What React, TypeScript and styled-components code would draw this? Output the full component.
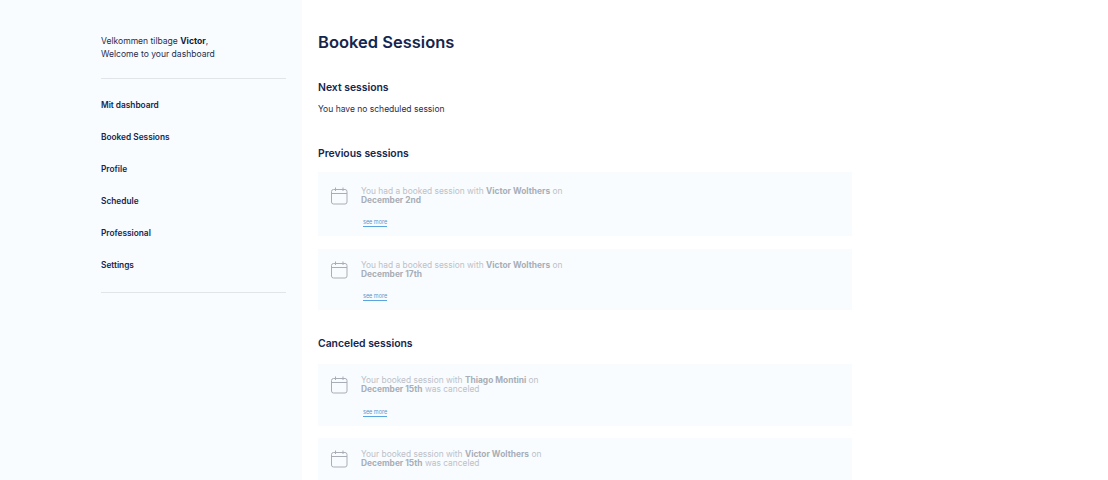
import React from 'react';
import styled, { createGlobalStyle } from 'styled-components';

const GlobalStyle = createGlobalStyle`
  html, body {
    margin: 0;
    padding: 0;
    background: #fff;
    overflow: hidden;
  }
  * { box-sizing: border-box; }
  body {
    font-family: "Inter", "Open Sans", sans-serif;
    color: #14264f;
  }
`;

const Page = styled.div`
  display: flex;
  width: 1108px;
  height: 480px;
  overflow: hidden;
`;

const Sidebar = styled.aside`
  width: 302px;
  flex-shrink: 0;
  background: #f8fcff;
  padding: 35px 16px 0 101px;
`;

const Greeting = styled.p`
  margin: 0;
  padding-bottom: 18px;
  font-size: 8.55px;
  line-height: 12.5px;
  color: #1f2d50;
  b { font-weight: 700; color: #0e1c3d; }
`;

const Nav = styled.nav`
  display: flex;
  flex-direction: column;
  gap: 20.1px;
  padding: 20px 0 20.5px;
  border-top: 1px solid #e1e5ea;
  border-bottom: 1px solid #e1e5ea;
`;

const NavItem = styled.a`
  font-size: 8.3px;
  line-height: 12px;
  font-weight: 600;
  color: #14264f;
`;

const Main = styled.main`
  flex: 1;
  padding: 31px 0 0 16px;
`;

const Title = styled.h1`
  margin: 0 0 28px;
  font-size: 16.5px;
  line-height: 22px;
  font-weight: 600;
  color: #14264f;
`;

const SectionTitle = styled.h2`
  margin: 0;
  font-size: 10.4px;
  line-height: 14px;
  font-weight: 600;
  color: #14264f;
`;

const Empty = styled.p`
  margin: 8px 0 32px;
  font-size: 8.5px;
  line-height: 12px;
  color: #1f2d50;
`;

const CardList = styled.div<{ $top: number; $gap: number; $bottom: number }>`
  display: flex;
  flex-direction: column;
  gap: ${p => p.$gap}px;
  margin: ${p => p.$top}px 0 ${p => p.$bottom}px;
`;

const Card = styled.div<{ $height: number; $inset: number }>`
  display: flex;
  gap: 13px;
  width: 534px;
  height: ${p => p.$height}px;
  padding: ${p => p.$inset}px 13px 9.5px;
  background: #f8fcff;
`;

const Icon = styled.svg`
  width: 17px;
  height: 18px;
  flex-shrink: 0;
  fill: none;
  stroke: #a9aeb6;
  stroke-width: 1;
`;

const CardBody = styled.div`
  flex: 1;
  display: flex;
  flex-direction: column;
  align-items: flex-start;
`;

const CardText = styled.p`
  margin: 0;
  font-size: 8.4px;
  line-height: 9.4px;
  color: #bdc1c7;
  b { font-weight: 700; color: #a9aeb6; }
`;

const SeeMore = styled.a`
  margin: auto 0 0 2px;
  font-size: 5.5px;
  line-height: 7px;
  color: #5a96cc;
  border-bottom: 1px solid #5aa5e0;
`;

const CalendarIcon = () => (
  <Icon viewBox="0 0 17 18">
    <rect x="0.5" y="2.5" width="15.5" height="14.5" rx="2" />
    <path d="M0.5 6.5H16M4.5 0.5V4M12 0.5V4" />
  </Icon>
);

interface SessionProps {
  height: number;
  inset?: number;
  lead: string;
  name: string;
  date: string;
  tail?: string;
  link?: boolean;
}

const Session: React.FC<SessionProps> = ({ height, inset = 12, lead, name, date, tail, link = true }) => (
  <Card $height={height} $inset={inset}>
    <CalendarIcon />
    <CardBody>
      <CardText>
        {lead} <b>{name}</b> on
        <br />
        <b>{date}</b>
        {tail ? ` ${tail}` : ''}
      </CardText>
      {link && <SeeMore>see more</SeeMore>}
    </CardBody>
  </Card>
);

const navItems = ['Mit dashboard', 'Booked Sessions', 'Profile', 'Schedule', 'Professional', 'Settings'];

export default function App() {
  return (
    <Page>
      <GlobalStyle />
      <Sidebar>
        <Greeting>
          Velkommen tilbage <b>Victor</b>,
          <br />
          Welcome to your dashboard
        </Greeting>
        <Nav>
          {navItems.map(item => (
            <NavItem key={item}>{item}</NavItem>
          ))}
        </Nav>
      </Sidebar>
      <Main>
        <Title>Booked Sessions</Title>
        <SectionTitle>Next sessions</SectionTitle>
        <Empty>You have no scheduled session</Empty>
        <SectionTitle>Previous sessions</SectionTitle>
        <CardList $top={11} $gap={13} $bottom={27}>
          <Session height={64} inset={14.5} lead="You had a booked session with" name="Victor Wolthers" date="December 2nd" />
          <Session height={61} lead="You had a booked session with" name="Victor Wolthers" date="December 17th" />
        </CardList>
        <SectionTitle>Canceled sessions</SectionTitle>
        <CardList $top={13} $gap={12} $bottom={0}>
          <Session height={62} lead="Your booked session with" name="Thiago Montini" date="December 15th" tail="was canceled" />
          <Session height={62} lead="Your booked session with" name="Victor Wolthers" date="December 15th" tail="was canceled" link={false} />
        </CardList>
      </Main>
    </Page>
  );
}
